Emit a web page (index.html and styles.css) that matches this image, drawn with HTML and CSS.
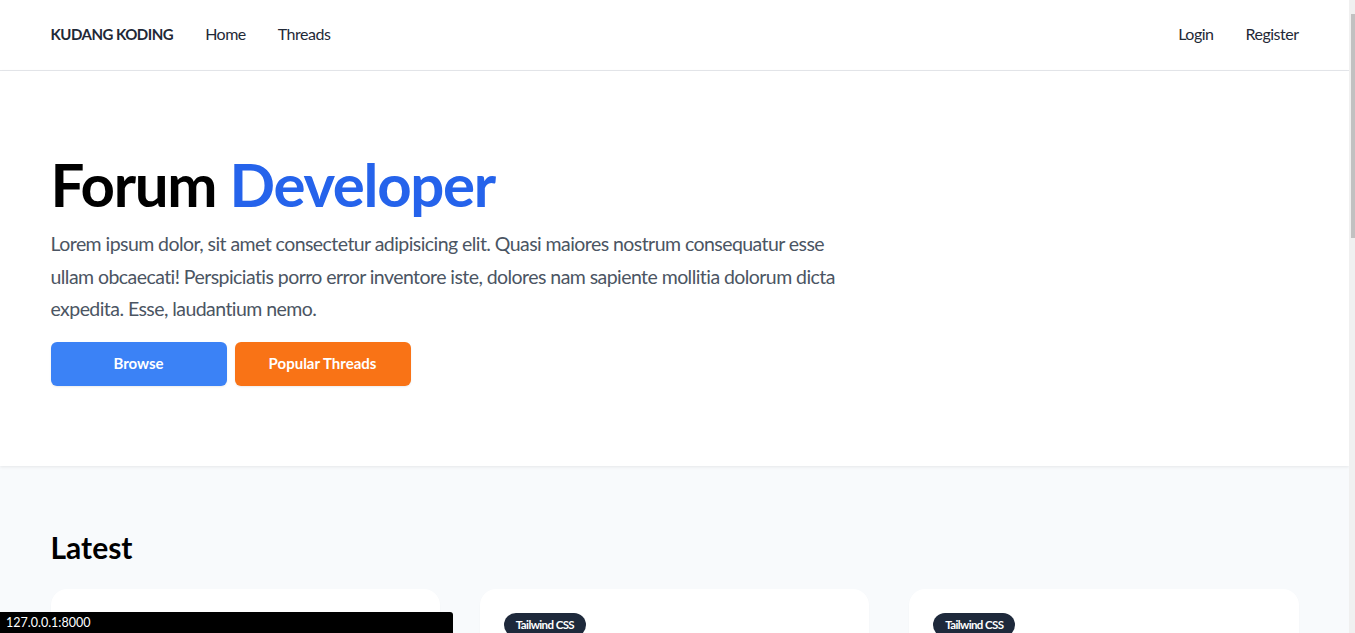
FILE: index.html
```html
<!DOCTYPE html>
<html lang="id">
<head>
<meta charset="utf-8">
<title>Kudang Koding - Forum Developer</title>
<link rel="stylesheet" href="styles.css">
</head>
<body>
<div class="page">
  <header class="nav">
    <div class="container nav-inner">
      <div class="nav-left">
        <a class="brand" href="#">KUDANG KODING</a>
        <a class="nav-link" href="#">Home</a>
        <a class="nav-link" href="#">Threads</a>
      </div>
      <div class="nav-right">
        <a class="nav-link" href="#">Login</a>
        <a class="nav-link" href="#">Register</a>
      </div>
    </div>
  </header>

  <section class="hero">
    <div class="container">
      <h1 class="hero-title">Forum <span class="accent">Developer</span></h1>
      <p class="hero-text">Lorem ipsum dolor, sit amet consectetur adipisicing elit. Quasi maiores nostrum consequatur esse<br>ullam obcaecati! Perspiciatis porro error inventore iste, dolores nam sapiente mollitia dolorum dicta<br>expedita. Esse, laudantium nemo.</p>
      <div class="hero-actions">
        <a class="btn btn-blue" href="#">Browse</a>
        <a class="btn btn-orange" href="#">Popular Threads</a>
      </div>
    </div>
  </section>

  <section class="latest">
    <div class="container">
      <h2 class="section-title">Latest</h2>
      <div class="cards">
        <article class="card">
          <span class="badge">Tailwind CSS</span>
        </article>
        <article class="card">
          <span class="badge">Tailwind CSS</span>
        </article>
        <article class="card">
          <span class="badge">Tailwind CSS</span>
        </article>
      </div>
    </div>
  </section>
</div>

<div class="statusbar">127.0.0.1:8000</div>
<div class="scrollbar"><div class="scroll-thumb"></div></div>
</body>
</html>
```

FILE: styles.css
```css
html, body {
  margin: 0;
  padding: 0;
  overflow: hidden;
  height: 100%;
}

body {
  font-family: "Lato", "Noto Sans", sans-serif;
  color: #111827;
  background: #f8fafc;
}

a {
  text-decoration: none;
  color: inherit;
}

.page {
  width: calc(100% - 6px);
}

.container {
  max-width: 1248px;
  margin: 0 auto;
  padding: 0 16px;
}

/* Navigation */
.nav {
  background: #ffffff;
  border-bottom: 1px solid #e5e7eb;
}

.nav-inner {
  height: 67px;
  padding-bottom: 3px;
  display: flex;
  align-items: center;
  justify-content: space-between;
}

.nav-left,
.nav-right {
  display: flex;
  align-items: center;
  gap: 32px;
}

.brand {
  font-size: 15px;
  font-weight: 700;
  letter-spacing: -0.5px;
  color: #1f2937;
}

.nav-link {
  font-size: 16px;
  letter-spacing: -0.5px;
  color: #1f2937;
}

/* Hero */
.hero {
  background: #ffffff;
  padding: 83px 0 80px;
  box-shadow: 0 1px 3px rgba(0, 0, 0, 0.08);
  position: relative;
}

.hero-title {
  margin: 0;
  font-size: 60px;
  line-height: 1;
  font-weight: 700;
  color: #000000;
  letter-spacing: -1.3px;
}

.accent {
  color: #2563eb;
}

.hero-text {
  margin: 14px 0 0;
  font-size: 19.5px;
  letter-spacing: -0.56px;
  line-height: 32.5px;
  color: #4b5563;
}

.hero-actions {
  margin-top: 16px;
  display: flex;
  gap: 8px;
}

.btn {
  width: 176px;
  height: 44px;
  display: flex;
  align-items: center;
  justify-content: center;
  padding-bottom: 1px;
  box-sizing: border-box;
  border-radius: 6px;
  color: #ffffff;
  font-size: 15px;
  font-weight: 700;
  box-shadow: 0 1px 2px rgba(0, 0, 0, 0.08);
}

.btn-blue {
  background: #3b82f6;
}

.btn-orange {
  background: #f97316;
}

/* Latest */
.latest {
  background: #f8fafc;
  padding: 63px 0 64px;
}

.section-title {
  margin: 0;
  font-size: 30px;
  line-height: 36px;
  font-weight: 700;
  color: #000000;
}

.cards {
  margin-top: 24px;
  display: grid;
  grid-template-columns: repeat(3, 1fr);
  gap: 40px;
}

.card {
  background: #ffffff;
  border-radius: 16px;
  padding: 24px;
  min-height: 160px;
  box-shadow: 0 1px 2px rgba(0, 0, 0, 0.03);
}

.badge {
  display: inline-block;
  background: #1e293b;
  color: #ffffff;
  font-size: 11.5px;
  font-weight: 700;
  line-height: 16px;
  padding: 4px 12px;
  border-radius: 999px;
  letter-spacing: -0.6px;
}

/* Browser status bar overlay */
.statusbar {
  position: fixed;
  left: 0;
  bottom: 0;
  width: 447px;
  height: 21px;
  padding-left: 6px;
  background: #000000;
  color: #ffffff;
  font-family: "Lato", "Noto Sans", sans-serif;
  font-size: 12.5px;
  line-height: 21px;
  border-top-right-radius: 3px;
}

/* Scrollbar overlay */
.scrollbar {
  position: fixed;
  top: 0;
  right: 0;
  width: 6px;
  height: 100%;
  background: #f0f0f0;
}

.scroll-thumb {
  position: absolute;
  top: 14px;
  left: 2px;
  right: 0;
  height: 224px;
  background: #c1c1c1;
}
```
